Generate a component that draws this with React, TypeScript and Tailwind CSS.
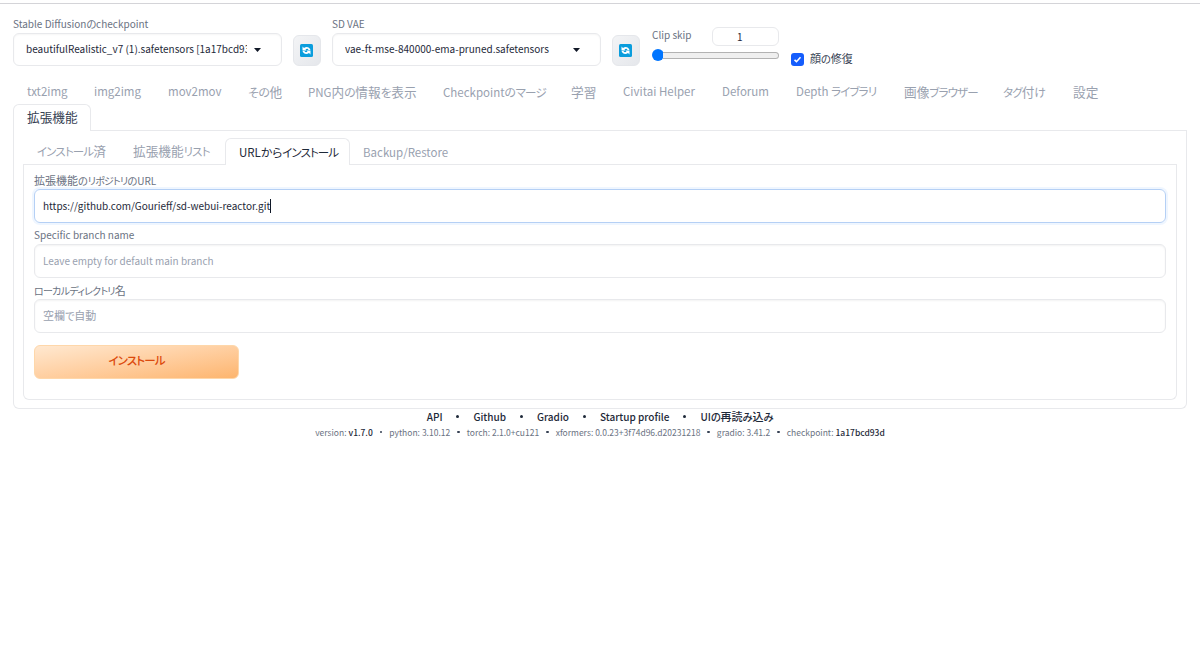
import type { ReactNode } from "react";
import clsx from "clsx";

const mainTabs = [
  { label: "txt2img", width: "w-[67px]" },
  { label: "img2img", width: "w-[74px]" },
  { label: "mov2mov", width: "w-[80px]" },
  { label: "その他", width: "w-[60px]" },
  { label: "PNG内の情報を表示", width: "w-[135px]" },
  { label: "Checkpointのマージ", width: "w-[128px]" },
  { label: "学習", width: "w-[52px]" },
  { label: "Civitai Helper", width: "w-[99px]" },
  { label: "Deforum", width: "w-[74px]" },
  { label: "Depth ライブラリ", width: "w-[108px]" },
  { label: "画像ブラウザー", width: "w-[99px]" },
  { label: "タグ付け", width: "w-[70px]" },
  { label: "設定", width: "w-[52px]" },
];

const footerLinks = ["API", "Github", "Gradio", "Startup profile", "UIの再読み込み"];

const versions = [
  { name: "version", value: "v1.7.0", strong: true },
  { name: "python", value: "3.10.12" },
  { name: "torch", value: "2.1.0+cu121" },
  { name: "xformers", value: "0.0.23+3f74d96.d20231218" },
  { name: "gradio", value: "3.41.2" },
  { name: "checkpoint", value: "1a17bcd93d", strong: true },
];

// Katakana is set tightest, then hiragana; kanji is a little larger than latin
function Label({ text }: { text: string }) {
  const runs = text
    .split(/([\u3040-\u309f]+|[\u30a0-\u30ff]+|[\u4e00-\u9fff]+)/)
    .filter(Boolean);
  return (
    <>
      {runs.map((run, i) => (
        <span
          key={i}
          className={clsx(
            /[\u3040-\u309f]/.test(run) &&
              "text-[1.03em] tracking-[-0.02em] [font-feature-settings:'palt']",
            /[\u30a0-\u30ff]/.test(run) &&
              "text-[1em] tracking-[-0.075em] [font-feature-settings:'palt']",
            /[\u4e00-\u9fff]/.test(run) && "text-[1.1em]"
          )}
        >
          {run}
        </span>
      ))}
    </>
  );
}

function RefreshButton() {
  return (
    <button className="mt-[18px] flex h-[31px] w-[28px] items-center justify-center rounded-[6px] border border-gray-200 bg-gradient-to-br from-gray-100 to-gray-200 pr-px">
      <svg width="13" height="13" viewBox="0 0 26 26" fill="none">
        <rect width="26" height="26" rx="3" fill="#0a9ddd" />
        <path d="M5 13V5l3 3c5-4 11-2 13 4h-4c-1-3-4-3-6-1l2 2z" fill="#fff" />
        <path d="M21 13v8l-3-3c-5 4-11 2-13-4h4c1 3 4 3 6 1l-2-2z" fill="#fff" />
      </svg>
    </button>
  );
}

function Select({ label, value }: { label: string; value: string }) {
  return (
    <div className="w-[269px]">
      <div className="h-[15px] whitespace-nowrap text-[10px] leading-[14px] text-gray-500">
        <Label text={label} />
      </div>
      <div className="mt-px flex h-[33px] items-center rounded-[6px] border border-[#e8e9ec] pb-[2px] pl-[12px] shadow-[inset_0_1px_2px_rgba(0,0,0,0.04)]">
        <span className="w-[221px] overflow-hidden whitespace-nowrap text-[10px] text-gray-800">
          {value}
        </span>
        <svg className="ml-[7px] mt-[2px]" width="7" height="4" viewBox="0 0 7 4">
          <path d="M0 0h7L3.5 4z" fill="#111827" />
        </svg>
      </div>
    </div>
  );
}

function Field({ label, focused, children }: { label: string; focused?: boolean; children: ReactNode }) {
  return (
    <div>
      <div className="h-[17px] whitespace-nowrap text-[10px] leading-[16px] text-gray-500">
        <Label text={label} />
      </div>
      <div
        className={clsx(
          "flex h-[34px] items-center rounded-[6px] border pb-px pl-2 text-[10px]",
          focused
            ? "border-[#b5d0f5] text-gray-800 shadow-[0_0_0_2px_#eff6ff]"
            : "border-[#e8e9ec] text-gray-400 shadow-[inset_0_1px_2px_rgba(0,0,0,0.05)]"
        )}
      >
        {children}
      </div>
    </div>
  );
}

export default function App() {
  return (
    <div className="h-[652px] w-[1200px] overflow-hidden bg-white pt-[3px] font-['Noto_Sans_CJK_JP',sans-serif]">
      <div className="h-px bg-[#d4d4d8]" />

      {/* Quick settings */}
      <div className="flex h-[77px] items-start pl-[13px] pt-[13px]">
        <Select label="Stable Diffusionのcheckpoint" value="beautifulRealistic_v7 (1).safetensors [1a17bcd93d]" />
        <div className="ml-[11px]">
          <RefreshButton />
        </div>
        <div className="ml-[11px]">
          <Select label="SD VAE" value="vae-ft-mse-840000-ema-pruned.safetensors" />
        </div>
        <div className="ml-[11px]">
          <RefreshButton />
        </div>
        <div className="ml-[12px] mt-[10px] w-[127px]">
          <div className="flex h-[19px] items-center justify-between">
            <span className="pb-[4px] text-[10px] leading-none text-gray-500">Clip skip</span>
            <div className="flex h-[19px] w-[67px] items-center rounded-[6px] border border-[#e8e9ec] pl-[24px] text-[10px] text-gray-800">
              1
            </div>
          </div>
          <div className="mt-[3px] flex h-[12px] items-center">
            <div className="size-[12px] shrink-0 rounded-full bg-[#0075ff]" />
            <div className="-ml-px h-[7px] flex-1 rounded-r-full border border-l-0 border-[#b2b2b2] bg-[#efefef]" />
          </div>
        </div>
        <div className="ml-[12px] mt-[35px] flex h-[14px] items-center gap-[6px]">
          <div className="flex size-[13px] items-center justify-center rounded-[3px] bg-blue-600">
            <svg width="9" height="9" viewBox="0 0 9 9" fill="none">
              <path d="M1.5 4.8L3.5 6.7L7.5 2.3" stroke="#fff" strokeWidth="1.6" />
            </svg>
          </div>
          <span className="whitespace-nowrap text-[10px] leading-none text-gray-700">
            <Label text="顔の修復" />
          </span>
        </div>
      </div>

      {/* Main tabs */}
      <div className="flex h-[23px] pl-[27px] text-[11.5px] leading-[21px] text-gray-400">
        {mainTabs.map((tab) => (
          <div key={tab.label} className={clsx("shrink-0 whitespace-nowrap", tab.width)}>
            <Label text={tab.label} />
          </div>
        ))}
      </div>
      <div className="flex h-[27px] pl-[13px]">
        <div className="w-[78px] rounded-t-[6px] border border-b-0 border-[#e8e9ec] pl-[13px] text-[11.5px] leading-[23px] text-gray-700">
          <Label text="拡張機能" />
        </div>
        <div className="mr-[13px] flex-1 border-b border-[#e8e9ec]" />
      </div>

      <div className="mx-[13px] h-[278px] rounded-b-[6px] border border-t-0 border-[#e8e9ec] px-[9px] pt-[7px]">
        {/* Extension tabs */}
        <div className="flex h-[27px] whitespace-nowrap text-[11.5px] leading-[26px] text-gray-400">
          <div className="w-[97px] border-b border-[#e8e9ec] pl-[14px]">
            <Label text="インストール済" />
          </div>
          <div className="w-[105px] border-b border-[#e8e9ec] pl-[13px]">
            <Label text="拡張機能リスト" />
          </div>
          <div className="w-[125px] rounded-t-[6px] border border-b-0 border-[#e8e9ec] pl-[13px] leading-[25px] text-gray-800">
            <Label text="URLからインストール" />
          </div>
          <div className="flex-1 border-b border-[#e8e9ec] pl-[13px] pt-px">Backup/Restore</div>
        </div>

        <div className="h-[235px] rounded-b-[6px] border border-t-0 border-[#e8e9ec] px-[10px] pt-[7px]">
          <div className="flex flex-col gap-[4px]">
            <Field label="拡張機能のリポジトリのURL" focused>
              https://github.com/Gourieff/sd-webui-reactor.git
              <span className="h-[14px] w-px bg-gray-900" />
            </Field>
            <Field label="Specific branch name">Leave empty for default main branch</Field>
            <Field label="ローカルディレクトリ名">
              <Label text="空欄で自動" />
            </Field>
          </div>
          <button className="mt-[12px] flex h-[34px] w-[205px] items-center justify-center rounded-[6px] border border-[#fed7aa] bg-gradient-to-br from-[#ffe8d0] to-[#fdb56e] pb-[2px] text-[11.5px] font-medium text-[#dc4a0c]">
            <Label text="インストール" />
          </button>
        </div>
      </div>

      {/* Footer */}
      <div className="-mt-px flex h-[17px] items-center justify-center whitespace-nowrap text-[10px] font-medium text-gray-800">
        {footerLinks.map((link, i) => (
          <div key={link} className="flex items-center">
            {i > 0 && <span className="mx-[14px] size-[3px] rounded-full bg-gray-800" />}
            <span>
              <Label text={link} />
            </span>
          </div>
        ))}
      </div>
      <div className="-mt-px flex h-[16px] items-center justify-center whitespace-nowrap text-[8.5px] text-gray-500">
        {versions.map((item, i) => (
          <div key={item.name} className="flex items-center">
            {i > 0 && <span className="mx-[7px] size-[2.5px] rounded-full bg-gray-700" />}
            <span>
              {item.name}: <span className={clsx(item.strong && "font-medium text-gray-800")}>{item.value}</span>
            </span>
          </div>
        ))}
      </div>
    </div>
  );
}
